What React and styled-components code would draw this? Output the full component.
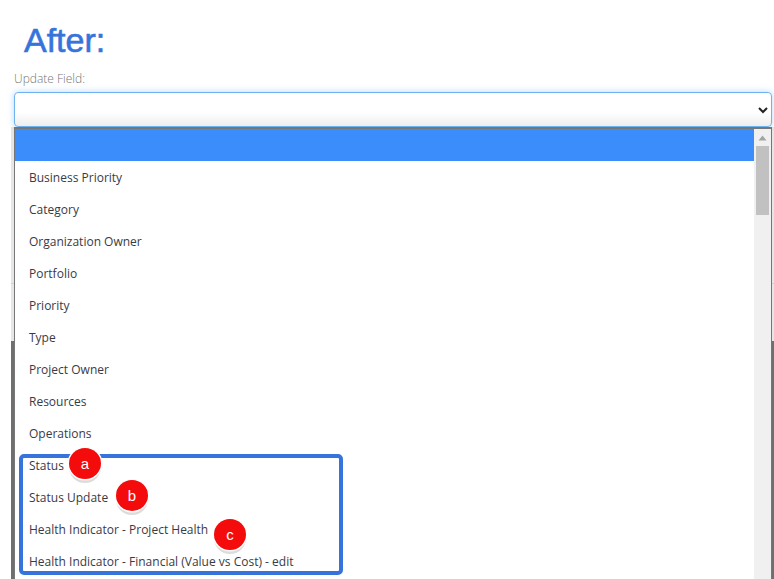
import React from "react";
import styled, { createGlobalStyle } from "styled-components";

const Global = createGlobalStyle`
  html, body { margin: 0; padding: 0; background: #fff; overflow: hidden; }
`;

const Page = styled.div`
  width: 774px;
  height: 579px;
  overflow: hidden;
  position: relative;
  background: #fff;
  font-family: "Open Sans", sans-serif;
  box-sizing: border-box;
  padding: 21px 2px 0 14px;
`;

const Backdrop = styled.div`
  position: absolute;
  left: 11px;
  right: 0;
  top: 127px;
  bottom: 0;
  background: linear-gradient(
    #e6e6e6 0,
    #e6e6e6 156px,
    #d2d2d2 156px,
    #d2d2d2 157px,
    #e6e6e6 157px,
    #e6e6e6 214px,
    #6f6f6f 214px
  );
`;

const Heading = styled.h1`
  position: relative;
  margin: 0 0 0 10px;
  font: 400 34px/38px "Liberation Sans", Arial, sans-serif;
  color: #3674dc;
  -webkit-text-stroke: 0.6px #3674dc;
`;

const Label = styled.div`
  position: relative;
  margin-top: 12px;
  font-size: 12px;
  font-weight: 300;
  line-height: 16px;
  color: #767676;
`;

const SelectBox = styled.div`
  position: relative;
  margin-top: 5px;
  height: 35px;
  box-sizing: border-box;
  border: 1px solid #6eb2ef;
  border-radius: 4px;
  background: linear-gradient(#fff 0, #fff 60%, #ededed 100%);
  box-shadow: 0 0 6px rgba(110, 178, 239, 0.5);
  display: flex;
  align-items: center;
  justify-content: flex-end;
  padding: 0 2px 0 0;
`;

const Dropdown = styled.div`
  position: relative;
  z-index: 1;
  height: 460px;
  box-sizing: border-box;
  border: 1px solid #767676;
  border-top-width: 2px;
  background: #fff;
  display: flex;
`;

const List = styled.ul`
  list-style: none;
  margin: 0;
  padding: 0;
  flex: 1;
`;

const Option = styled.li`
  height: 32px;
  box-sizing: border-box;
  padding-left: 14px;
  font-size: 12px;
  line-height: 34px;
  color: #3a3a44;
  background: ${(p) => (p.$selected ? "#3a8dfa" : "transparent")};
`;

const Track = styled.div`
  width: 17px;
  background: #f0f0f0;
  display: flex;
  flex-direction: column;
  align-items: center;
`;

const ArrowButton = styled.div`
  height: 17px;
  display: flex;
  align-items: center;
  justify-content: center;
`;

const Thumb = styled.div`
  width: 13px;
  height: 69px;
  background: #c1c1c1;
`;

const Highlight = styled.div`
  position: absolute;
  left: 19px;
  top: 454px;
  width: 324px;
  height: 121px;
  box-sizing: border-box;
  border: 4px solid #3674dc;
  border-radius: 5px;
  z-index: 2;
`;

const Marker = styled.div`
  position: absolute;
  z-index: 3;
  left: ${(p) => p.$x}px;
  top: ${(p) => p.$y}px;
  width: 32px;
  height: 31px;
  border-radius: 50%;
  background: #f40b0b;
  color: #fff;
  font: 400 15px/31px "Liberation Sans", Arial, sans-serif;
  text-align: center;
  box-shadow: 0 0 0 1.5px #fff, 0 4px 0 #dcdcdc;
`;

const options = [
  "",
  "Business Priority",
  "Category",
  "Organization Owner",
  "Portfolio",
  "Priority",
  "Type",
  "Project Owner",
  "Resources",
  "Operations",
  "Status",
  "Status Update",
  "Health Indicator - Project Health",
  "Health Indicator - Financial (Value vs Cost) - edit",
];

export default function App() {
  return (
    <Page>
      <Global />
      <Backdrop />
      <Heading>After:</Heading>
      <Label>Update Field:</Label>
      <SelectBox>
        <svg width="12" height="12" viewBox="0 0 12 12" aria-hidden="true">
          <path d="M2 4l4 4 4-4" fill="none" stroke="#222" strokeWidth="2" />
        </svg>
      </SelectBox>
      <Dropdown>
        <List>
          {options.map((o, i) => (
            <Option key={i} $selected={i === 0}>{o}</Option>
          ))}
        </List>
        <Track>
          <ArrowButton>
            <svg width="9" height="6" viewBox="0 0 9 6" aria-hidden="true">
              <path d="M4.5 0.5L8.5 5.5H0.5Z" fill="#a3a3a3" />
            </svg>
          </ArrowButton>
          <Thumb />
        </Track>
      </Dropdown>
      <Highlight />
      <Marker $x={69} $y={448}>a</Marker>
      <Marker $x={116} $y={480}>b</Marker>
      <Marker $x={214} $y={519}>c</Marker>
    </Page>
  );
}
